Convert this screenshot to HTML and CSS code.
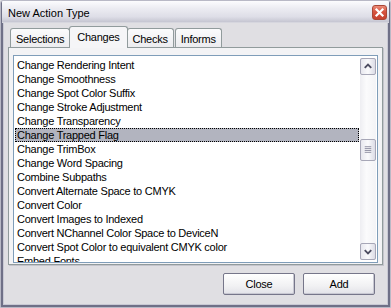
FILE: index.html
```html
<!DOCTYPE html>
<html>
<head>
<meta charset="utf-8">
<link rel="stylesheet" href="styles.css">
</head>
<body>
<div class="window">
  <div class="titlebar">
    <span class="title">New Action Type</span>
    <span class="close">
      <svg width="15" height="15" viewBox="0 0 15 15">
        <path d="M4.5 4.5 L10.5 10.5 M10.5 4.5 L4.5 10.5" stroke="#fff" stroke-width="2.2" stroke-linecap="square" fill="none"/>
      </svg>
    </span>
  </div>
  <div class="body">
    <div class="tabs">
      <div class="tab">Selections</div>
      <div class="tab active">Changes</div>
      <div class="tab">Checks</div>
      <div class="tab">Informs</div>
    </div>
    <div class="panel">
      <div class="listbox">
        <ul class="items">
          <li>Change Rendering Intent</li>
          <li>Change Smoothness</li>
          <li>Change Spot Color Suffix</li>
          <li>Change Stroke Adjustment</li>
          <li>Change Transparency</li>
          <li class="selected">Change Trapped Flag</li>
          <li>Change TrimBox</li>
          <li>Change Word Spacing</li>
          <li>Combine Subpaths</li>
          <li>Convert Alternate Space to CMYK</li>
          <li>Convert Color</li>
          <li>Convert Images to Indexed</li>
          <li>Convert NChannel Color Space to DeviceN</li>
          <li>Convert Spot Color to equivalent CMYK color</li>
          <li>Embed Fonts</li>
        </ul>
        <div class="scrollbar">
          <div class="sb-btn">
            <svg width="15" height="15" viewBox="0 0 15 15"><path d="M4 9 L7.5 5.5 L11 9" stroke="#4d4d61" stroke-width="2" fill="none"/></svg>
          </div>
          <div class="sb-track">
            <div class="thumb">
              <svg width="15" height="20" viewBox="0 0 15 20"><path d="M4 6.5 H11 M4 8.5 H11 M4 10.5 H11 M4 12.5 H11" stroke="#8b8b9e" stroke-width="1" fill="none"/></svg>
            </div>
          </div>
          <div class="sb-btn">
            <svg width="15" height="15" viewBox="0 0 15 15"><path d="M4 6 L7.5 9.5 L11 6" stroke="#4d4d61" stroke-width="2" fill="none"/></svg>
          </div>
        </div>
      </div>
    </div>
    <div class="buttons">
      <button class="btn">Close</button>
      <button class="btn">Add</button>
    </div>
  </div>
</div>
</body>
</html>
```

FILE: styles.css
```css
html, body {
  margin: 0;
  padding: 0;
  background: #e0dfe3;
}

.window {
  width: 391px;
  height: 308px;
  box-sizing: border-box;
  background: #e0dfe3;
  border: 1px solid #b9b9c6;
  box-shadow: inset 0 0 0 2px #6f7087, inset 0 0 0 3px #c9c9d4;
  font-family: "Liberation Sans", Arial, sans-serif;
  font-size: 11px;
  letter-spacing: -0.25px;
  color: #000;
  display: flex;
  flex-direction: column;
  overflow: hidden;
  border-radius: 3px 3px 0 0;
}

.titlebar {
  height: 21px;
  flex: none;
  display: flex;
  align-items: center;
  justify-content: space-between;
  padding: 0 2px 0 6px;
  background: linear-gradient(#fcfcfe 0%, #ececf2 35%, #dedee7 75%, #c5c5d1 100%);
  border-bottom: 1px solid #d6d6de;
  margin: 0 1px;
}

.title {
  font-size: 11px;
  letter-spacing: 0;
  padding-top: 2px;
}

.close {
  width: 15px;
  height: 15px;
  box-sizing: border-box;
  border: 1px solid #a94636;
  border-radius: 3px;
  background: linear-gradient(#eb8c79 0%, #d6533f 45%, #c6412f 100%);
  display: flex;
  margin-top: 1px;
}

.close svg {
  margin: -1px;
}

.body {
  flex: 1;
  display: flex;
  flex-direction: column;
  padding: 4px 7px 0 7px;
}

.tabs {
  display: flex;
  align-items: flex-end;
  height: 21px;
  padding-left: 2px;
  position: relative;
  z-index: 1;
  margin-bottom: -1px;
}

.tab {
  height: 19px;
  box-sizing: border-box;
  padding: 4px 5px 0 5px;
  background: linear-gradient(#fbfbfc, #ececef);
  border: 1px solid #919b9c;
  border-bottom: none;
  border-radius: 3px 3px 0 0;
  margin: 0 1px 1px 0;
}

.tab.active {
  height: 22px;
  padding: 4px 7px 0 7px;
  margin: 0 -1px 0 -2px;
  background: #f5f5f7;
  position: relative;
  z-index: 2;
}

.panel {
  height: 218px;
  box-sizing: border-box;
  background: #f3f3f5;
  border: 1px solid #919b9c;
  box-shadow: 1px 1px 0 #c4c4cc;
  padding: 7px 4px 1px 4px;
  display: flex;
}

.listbox {
  flex: 1;
  display: flex;
  background: #fff;
  border: 1px solid #7f9db9;
  height: 208px;
  box-sizing: border-box;
}

.items {
  list-style: none;
  margin: 2px 1px 0 1px;
  padding: 0;
  flex: 1;
  overflow: hidden;
}

.items li {
  height: 14px;
  box-sizing: border-box;
  line-height: 12px;
  padding-left: 1px;
  border: 1px dotted transparent;
  white-space: nowrap;
}

.items li.selected {
  background: #b2b4bf;
  border-color: #000;
}

.scrollbar {
  width: 16px;
  margin: 2px 1px 2px 0;
  display: flex;
  flex-direction: column;
  background: linear-gradient(90deg, #eeeef2, #fbfbfc 40%, #f3f3f6);
}

.sb-btn {
  height: 17px;
  box-sizing: border-box;
  border: 1px solid #a7a7b7;
  border-radius: 2px;
  background: linear-gradient(90deg, #e7e7ee, #fafafc 50%, #dcdce6);
  display: flex;
  align-items: center;
  justify-content: center;
}

.sb-track {
  flex: 1;
}

.thumb {
  margin-top: 64px;
  height: 22px;
  box-sizing: border-box;
  border: 1px solid #a7a7b7;
  border-radius: 2px;
  background: linear-gradient(90deg, #e7e7ee, #fafafc 50%, #dcdce6);
  display: flex;
  align-items: center;
  justify-content: center;
}

.buttons {
  display: flex;
  justify-content: flex-end;
  gap: 8px;
  padding: 8px 8px 0 0;
}

.btn {
  width: 72px;
  height: 22px;
  font-family: "Liberation Sans", Arial, sans-serif;
  font-size: 11px;
  letter-spacing: -0.25px;
  color: #000;
  border: 1px solid #76768a;
  border-radius: 2px;
  background: linear-gradient(#ffffff, #f1f1f3 60%, #e2e2e8);
  box-shadow: inset -1px -1px 0 #c8c8d2;
  padding: 0;
}
```
